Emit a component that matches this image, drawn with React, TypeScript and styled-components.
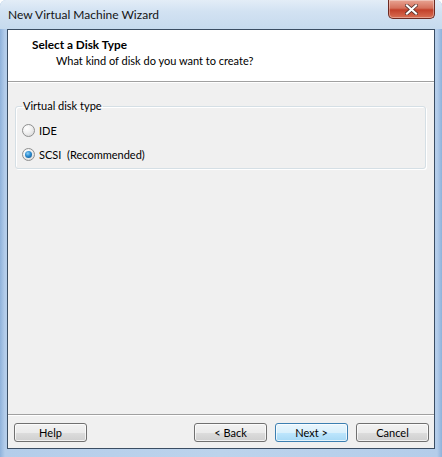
import React from 'react';
import styled, { createGlobalStyle } from 'styled-components';

const GlobalStyle = createGlobalStyle`
  html, body {
    margin: 0;
    padding: 0;
    overflow: hidden;
    background: #ffffff;
  }
  * {
    box-sizing: border-box;
  }
`;

const font = `Lato, 'Noto Sans', 'DejaVu Sans', sans-serif`;

const Window = styled.div`
  display: flex;
  flex-direction: column;
  width: 442px;
  height: 457px;
  padding: 0 7px 8px 7px;

  border-radius: 6px 6px 0 0;
  background: linear-gradient(90deg, #8fb2db 0px, #b4cdea 5px, #bcd3ec 50%, #b4cdea calc(100% - 5px), #8fb2db 100%);
  font-family: ${font};
`;

const TitleBar = styled.div`
  display: flex;
  align-items: flex-start;
  justify-content: space-between;
  height: 29px;
  margin: 0 -7px;
  padding: 0 7px 0 8px;

  border-radius: 6px 6px 0 0;
  background: linear-gradient(180deg, #e3edf7 0%, #d2e2f2 40%, #c6daee 100%);
`;

const Caption = styled.span`
  padding-top: 8px;

  font-size: 12px;
  line-height: 14px;
  color: #141414;
`;

const CloseButton = styled.div`
  display: flex;
  align-items: center;
  justify-content: center;
  width: 47px;
  height: 19px;

  border: 1px solid #6d2a22;
  border-top: none;
  border-radius: 0 0 5px 5px;
  background: linear-gradient(180deg, #e8a493 0%, #d5715c 45%, #c2402a 55%, #d86f54 100%);
  box-shadow: inset 0 0 0 1px rgba(255, 255, 255, 0.35);
`;

const Client = styled.div`
  display: flex;
  flex-direction: column;
  flex: 1;

  border: 1px solid #3a4d63;
  background: #f0f0f0;
`;

const Header = styled.div`
  display: flex;
  flex-direction: column;
  height: 52px;
  padding: 7px 0 0 24px;

  background: #ffffff;
  border-bottom: 1px solid #a0a0a0;
  box-shadow: 0 1px 0 #ffffff;
`;

const HeaderTitle = styled.div`
  font-size: 11.8px;
  font-weight: 700;
  line-height: 16px;
  color: #000000;
`;

const HeaderSubtitle = styled.div`
  padding-left: 24px;

  font-size: 11px;
  line-height: 16px;
  color: #000000;
`;

const Body = styled.div`
  flex: 1;
  padding: 17px 8px 0 7px;
`;

const GroupBox = styled.fieldset`
  margin: 0;
  padding: 5px 8px 8px 6px;
  height: 70px;

  border: 1px solid #d5dfe5;
  border-radius: 3px;
  box-shadow: inset 1px 1px 0 #ffffff, 1px 1px 0 #ffffff;
`;

const Legend = styled.legend`
  padding: 0 1px;
  margin-left: 0;

  font-size: 11px;
  line-height: 14px;
  color: #000000;
`;

const RadioRow = styled.label`
  display: flex;
  align-items: center;
  gap: 4px;
  height: 24px;

  font-size: 11px;
  color: #000000;
`;

const RadioCircle = styled.span<{ $checked?: boolean }>`
  position: relative;
  width: 13px;
  height: 13px;

  border: 1px solid #8e8f8f;
  border-radius: 50%;
  background: radial-gradient(circle at 35% 30%, #ffffff 0%, #f2f2f2 40%, #d3d3d3 100%);

  &::after {
    content: '';
    display: ${(p) => (p.$checked ? 'block' : 'none')};
    position: absolute;
    top: 2px;
    left: 2px;
    width: 7px;
    height: 7px;

    border-radius: 50%;
    background: radial-gradient(circle at 40% 35%, #8fd0f5 0%, #2a8bd0 45%, #0f4d7f 100%);
  }
`;

const Separator = styled.div`
  height: 2px;

  border-top: 1px solid #a0a0a0;
  border-bottom: 1px solid #ffffff;
`;

const Footer = styled.div`
  display: flex;
  align-items: center;
  gap: 8px;
  padding: 7px 5px 6px 6px;
`;

const Spacer = styled.div`
  flex: 1;
`;

const Button = styled.button<{ $default?: boolean }>`
  width: 73px;
  height: 19px;
  padding: 0;

  border: 1px solid ${(p) => (p.$default ? '#3c7fb1' : '#707070')};
  border-radius: 3px;
  background: ${(p) =>
    p.$default
      ? 'linear-gradient(180deg, #eaf6fd 0%, #d9f0fc 50%, #bee6fd 51%, #a7d9f5 100%)'
      : 'linear-gradient(180deg, #f2f2f2 0%, #ebebeb 50%, #dddddd 51%, #cfcfcf 100%)'};
  box-shadow: inset 0 0 0 1px rgba(255, 255, 255, 0.7);

  font-family: ${font};
  font-size: 11px;
  line-height: 15px;
  color: #000000;
`;

const App = () => {
  return (
    <>
      <GlobalStyle />
      <Window>
        <TitleBar>
          <Caption>New Virtual Machine Wizard</Caption>
          <CloseButton>
            <svg width="13" height="11" viewBox="0 0 13 11">
              <path d="M2 1.5 L11 9.5 M11 1.5 L2 9.5" stroke="#4a2a26" strokeWidth="3.6" strokeLinecap="square" />
              <path d="M2 1.5 L11 9.5 M11 1.5 L2 9.5" stroke="#ffffff" strokeWidth="2.2" strokeLinecap="square" />
            </svg>
          </CloseButton>
        </TitleBar>
        <Client>
          <Header>
            <HeaderTitle>Select a Disk Type</HeaderTitle>
            <HeaderSubtitle>What kind of disk do you want to create?</HeaderSubtitle>
          </Header>
          <Body>
            <GroupBox>
              <Legend>Virtual disk type</Legend>
              <RadioRow>
                <RadioCircle />
                IDE
              </RadioRow>
              <RadioRow>
                <RadioCircle $checked />
                SCSI&nbsp;&nbsp;(Recommended)
              </RadioRow>
            </GroupBox>
          </Body>
          <Separator />
          <Footer>
            <Button>Help</Button>
            <Spacer />
            <Button>&lt; Back</Button>
            <Button $default>Next &gt;</Button>
            <Button>Cancel</Button>
          </Footer>
        </Client>
      </Window>
    </>
  );
};

export default App;
